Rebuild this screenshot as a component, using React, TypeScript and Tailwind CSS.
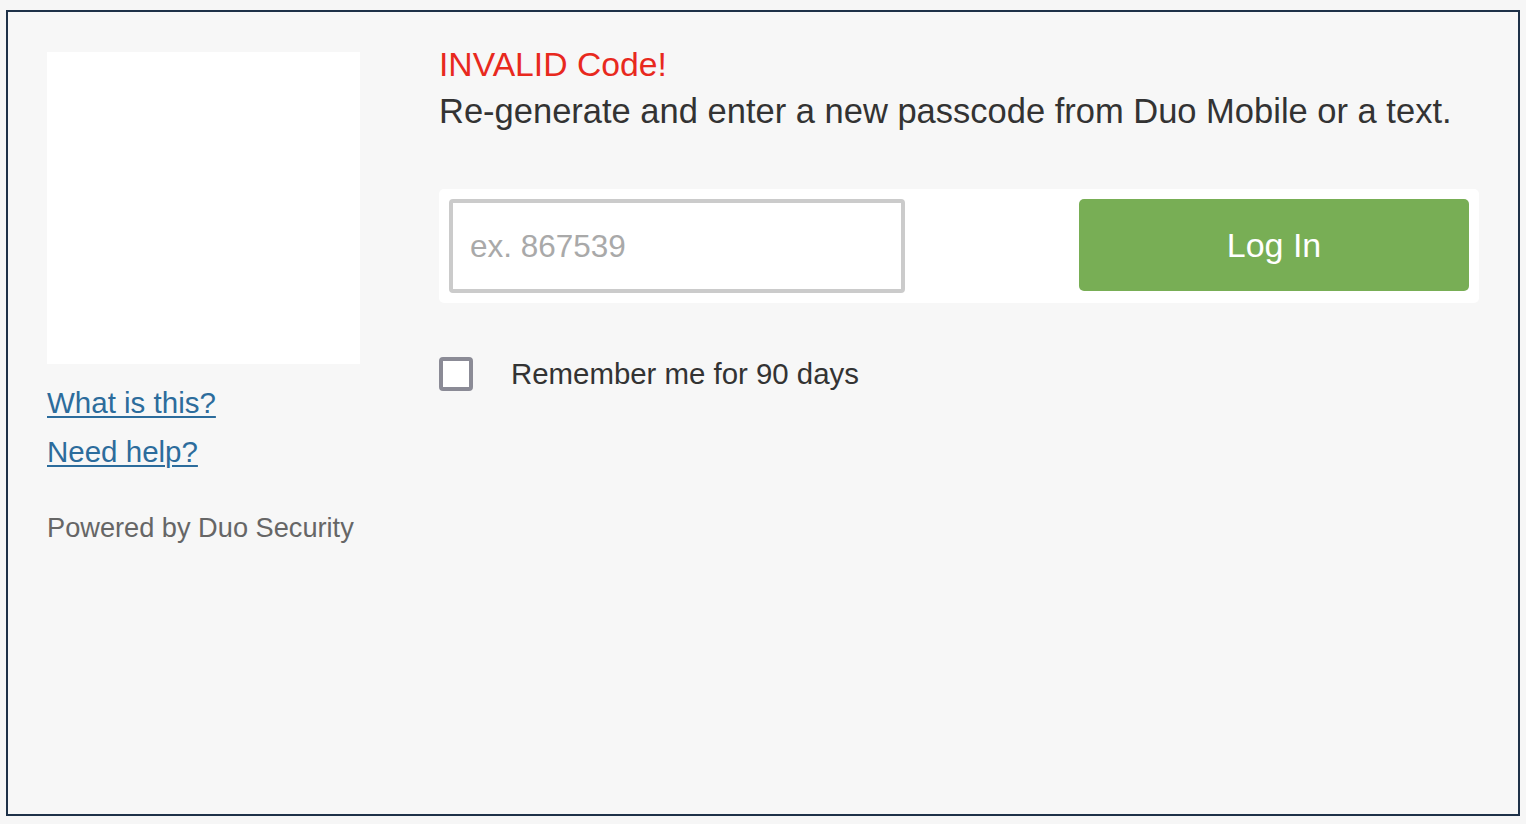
export default function App() {
    return (
        <div className="min-h-screen w-full bg-[#f6f6f6] pl-[6px] pt-[10px] font-['Liberation_Sans',Arial,sans-serif]">
            <div className="flex h-[806px] w-[1514px] border-2 border-[#1e3148] bg-[#f7f7f7] pl-[39px]">
                <div className="flex w-[313px] flex-col">
                    <div className="mt-[40px] h-[312px] w-[313px] bg-white" />
                    <a href="#" className="mt-[22px] text-[29.5px] leading-[34px] text-[#2c6c9c] underline decoration-2 underline-offset-[3px]">
                        What is this?
                    </a>
                    <a href="#" className="mt-[15px] text-[29.5px] leading-[34px] text-[#2c6c9c] underline decoration-2 underline-offset-[3px]">
                        Need help?
                    </a>
                    <p className="mt-[43px] text-[27.2px] leading-[32px] text-[#666666]">Powered by Duo Security</p>
                </div>

                <div className="ml-[79px] flex w-[1040px] flex-col">
                    <p className="mt-[33px] text-[33.7px] leading-[38px] text-[#e8291e]">INVALID Code!</p>
                    <p className="mt-[8px] whitespace-nowrap text-[34.5px] leading-[40px] text-[#333333]">
                        Re-generate and enter a new passcode from Duo Mobile or a text.
                    </p>

                    <div className="mt-[58px] flex h-[114px] items-start justify-between rounded-[5px] bg-white p-[10px]">
                        <input
                            type="text"
                            placeholder="ex. 867539"
                            className="h-[94px] w-[456px] rounded-[4px] border-4 border-[#cbcbcb] bg-white pl-[17px] text-[31.5px] text-[#333] outline-none placeholder:text-[#a9a9a9]"
                        />
                        <button className="h-[92px] w-[390px] rounded-[5px] bg-[#78ae55] text-[34px] text-white">
                            Log In
                        </button>
                    </div>

                    <label className="mt-[54px] flex items-center">
                        <span className="h-[34px] w-[34px] rounded-[4px] border-4 border-[#8b8b96] bg-white" />
                        <span className="ml-[38px] text-[29.4px] leading-[34px] text-[#333333]">Remember me for 90 days</span>
                    </label>
                </div>
            </div>
        </div>
    );
}
